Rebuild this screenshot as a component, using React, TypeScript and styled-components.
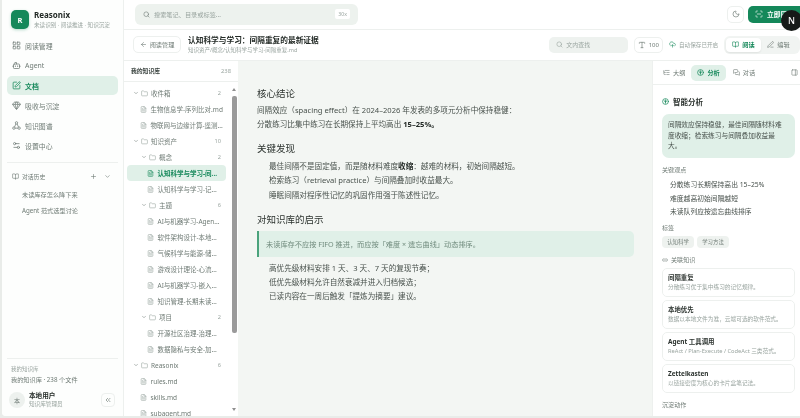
import React from 'react';
import styled, { createGlobalStyle } from 'styled-components';
import {
  ArrowLeft, BookOpen, Bot, ChevronDown, ChevronsLeft, CloudUpload, FileText, Folder, Gem, LayoutGrid,
  Link2, ListTree, MessagesSquare, Moon, PanelRight, PenLine, Plus, ScanLine, Search, Settings2, SquarePen, Type,
} from 'lucide-react';

const GREEN = '#15885a';
const MINT = '#e0f0e8';
const GREY = '#6f7b75';
const LIGHT = '#9aa5a0';
const LINE = '#edf0ee';

const GlobalStyle = createGlobalStyle`
  html, body { margin: 0; padding: 0; background: #e9ece9; }
  * { box-sizing: border-box; }
  body { font-family: "Noto Sans", "Noto Sans CJK SC", sans-serif; color: #2b322e; }
  p, h1, h2, h3, ul { margin: 0; padding: 0; }
  li { list-style: none; }
`;

const Page = styled.div`
  width: 800px;
  height: 418px;
  padding: 0 0 2px 2px;
  overflow: hidden;
  position: relative;
  background: #e9ece9;
  filter: blur(0.3px);
`;

const Shell = styled.div`
  height: 416px;
  display: flex;
  background: #fff;
  border-bottom-left-radius: 4px;
  overflow: hidden;
`;

const Sidebar = styled.aside`
  width: 122px;
  flex-shrink: 0;
  display: flex;
  flex-direction: column;
  border-right: 1px solid ${LINE};
  background: #fdfefd;
`;

const Brand = styled.div`
  height: 36px;
  padding: 10px 0 0 9px;
  display: flex;
  gap: 5px;
`;

const LogoMark = styled.div`
  width: 18px;
  height: 19px;
  border-radius: 5px;
  background: ${GREEN};
  color: #fff;
  font-size: 7.5px;
  font-weight: 700;
  display: flex;
  align-items: center;
  justify-content: center;
  box-shadow: 0 1px 3px rgba(21, 136, 90, 0.3);
`;

const BrandName = styled.div`
  font-size: 8px;
  font-weight: 700;
  line-height: 10px;
  color: #1f2622;
`;

const BrandSub = styled.div`
  font-size: 5.6px;
  line-height: 10px;
  color: ${LIGHT};
  white-space: nowrap;
`;

const Nav = styled.nav`
  padding: 0 5px;
  display: flex;
  flex-direction: column;
  gap: 1px;
`;

const NavItem = styled.div<{ $active?: boolean }>`
  height: 19px;
  padding-left: 5px;
  display: flex;
  align-items: center;
  gap: 4px;
  border-radius: 5px;
  font-size: 6.9px;
  font-weight: ${p => (p.$active ? 700 : 400)};
  color: ${p => (p.$active ? GREEN : GREY)};
  background: ${p => (p.$active ? MINT : 'transparent')};
`;

const HistoryBlock = styled.div`
  margin: 7px 5px 0;
  padding-top: 7px;
  border-top: 1px solid ${LINE};
`;

const HistoryHead = styled.div`
  height: 12px;
  margin-bottom: 5px;
  padding: 0 7px 0 5px;
  display: flex;
  align-items: center;
  gap: 3px;
  font-size: 5.8px;
  color: ${GREY};
  & > span { flex: 1; }
  & > svg:last-child { margin-left: 4px; }
`;

const HistoryItem = styled.div`
  height: 16px;
  padding-left: 15px;
  line-height: 16px;
  font-size: 6.2px;
  color: ${GREY};
`;

const SideFooter = styled.div`
  margin: auto 5px 0;
  padding: 5px 0 7px;
  border-top: 1px solid ${LINE};
`;

const LibLabel = styled.div`
  padding-left: 4px;
  font-size: 5.5px;
  line-height: 10px;
  color: ${LIGHT};
`;

const LibValue = styled.div`
  padding-left: 4px;
  font-size: 6.2px;
  line-height: 11px;
  color: ${GREY};
`;

const UserRow = styled.div`
  margin-top: 6px;
  padding: 0 2px;
  display: flex;
  align-items: center;
  gap: 4px;
`;

const Avatar = styled.div`
  width: 16px;
  height: 16px;
  border-radius: 50%;
  background: #edf1ee;
  color: ${GREY};
  font-size: 6px;
  display: flex;
  align-items: center;
  justify-content: center;
`;

const UserName = styled.div`
  font-size: 6.6px;
  font-weight: 700;
  line-height: 9px;
  color: #232a26;
`;

const UserRole = styled.div`
  font-size: 5.6px;
  line-height: 9px;
  color: ${LIGHT};
`;

const CollapseButton = styled.div`
  margin-left: auto;
  margin-right: 1px;
  width: 14px;
  height: 14px;
  border: 1px solid ${LINE};
  border-radius: 4px;
  color: ${GREY};
  display: flex;
  align-items: center;
  justify-content: center;
`;

const Main = styled.main`
  flex: 1;
  min-width: 0;
  display: flex;
  flex-direction: column;
  overflow: hidden;
`;

const TopBar = styled.header`
  height: 30px;
  flex-shrink: 0;
  padding: 0 0 1px 11px;
  display: flex;
  align-items: center;
  justify-content: space-between;
  border-bottom: 1px solid ${LINE};
`;

const SearchBox = styled.div`
  width: 223px;
  height: 21px;
  padding: 0 8px;
  border-radius: 6px;
  background: #edf2ee;
  color: ${LIGHT};
  font-size: 6.2px;
  display: flex;
  align-items: center;
  gap: 4px;
  & > span { flex: 1; }
`;

const Kbd = styled.div`
  padding: 1px 3px;
  border-radius: 2px;
  background: #fff;
  font-size: 5.2px;
  color: ${LIGHT};
`;

const TopActions = styled.div`
  margin-right: -12px;
  display: flex;
  align-items: center;
  gap: 4px;
`;

const IconButton = styled.div`
  width: 17px;
  height: 17px;
  border: 1px solid ${LINE};
  border-radius: 5px;
  color: ${GREY};
  display: flex;
  align-items: center;
  justify-content: center;
`;

const PrimaryButton = styled.div`
  width: 64px;
  height: 17px;
  padding-left: 7px;
  border-radius: 5px;
  background: ${GREEN};
  color: #fff;
  font-size: 6.8px;
  font-weight: 700;
  display: flex;
  align-items: center;
  gap: 4px;
`;

const DocHeader = styled.div`
  height: 31px;
  flex-shrink: 0;
  padding: 0 0 1px 9px;
  display: flex;
  align-items: center;
  border-bottom: 1px solid ${LINE};
`;

const BackButton = styled.div`
  width: 49px;
  height: 17px;
  border: 1px solid ${LINE};
  border-radius: 5px;
  color: ${GREY};
  font-size: 6.2px;
  display: flex;
  align-items: center;
  justify-content: center;
  gap: 3px;
`;

const DocTitleBlock = styled.div`
  margin-left: 7px;
  width: 369px;
`;

const DocTitle = styled.h1`
  font-size: 7.7px;
  font-weight: 700;
  line-height: 11px;
  color: #232a26;
`;

const DocPath = styled.div`
  font-size: 5.5px;
  line-height: 9px;
  color: ${LIGHT};
`;

const FindBox = styled.div`
  width: 80px;
  height: 16px;
  padding-left: 7px;
  border-radius: 5px;
  background: #eef2ef;
  color: ${LIGHT};
  font-size: 6px;
  display: flex;
  align-items: center;
  gap: 3px;
`;

const FontBox = styled.div`
  margin-left: 6px;
  width: 30px;
  height: 16px;
  border: 1px solid ${LINE};
  border-radius: 5px;
  color: ${GREY};
  font-size: 6px;
  display: flex;
  align-items: center;
  justify-content: center;
  gap: 3px;
`;

const AutoSave = styled.div`
  margin-left: 6px;
  width: 55px;
  flex-shrink: 0;
  color: ${LIGHT};
  font-size: 5.6px;
  white-space: nowrap;
  display: flex;
  align-items: center;
  gap: 3px;
  & > svg { color: ${GREEN}; flex-shrink: 0; }
`;

const Segmented = styled.div`
  width: 76px;
  flex-shrink: 0;
  height: 18px;
  padding: 2px;
  border-radius: 6px;
  background: #f1f4f2;
  display: flex;
  align-items: center;
`;

const SegItem = styled.div<{ $active?: boolean }>`
  width: 35px;
  height: 14px;
  border-radius: 4px;
  background: ${p => (p.$active ? '#fff' : 'transparent')};
  box-shadow: ${p => (p.$active ? '0 1px 2px rgba(0,0,0,0.08)' : 'none')};
  color: ${p => (p.$active ? GREEN : GREY)};
  font-weight: ${p => (p.$active ? 700 : 400)};
  font-size: 6.2px;
  display: flex;
  align-items: center;
  justify-content: center;
  gap: 3px;
`;

const Body = styled.div`
  flex: 1;
  min-height: 0;
  display: grid;
  grid-template-columns: 114px 414px 148px;
`;

const TreePanel = styled.section`
  display: flex;
  flex-direction: column;
  min-height: 0;
`;

const TreeHead = styled.div`
  height: 21px;
  flex-shrink: 0;
  padding: 0 7px 1px 7px;
  display: flex;
  align-items: center;
  justify-content: space-between;
  border-bottom: 1px solid ${LINE};
  font-size: 5.8px;
  font-weight: 700;
  color: #3b4440;
  & > span { font-weight: 400; color: ${LIGHT}; }
`;

const TreeScroll = styled.div`
  flex: 1;
  min-height: 0;
  display: flex;
  padding-left: 3px;
`;

const TreeList = styled.ul`
  width: 99px;
  padding-top: 3px;
`;

const TreeRow = styled.li<{ $indent: number; $active?: boolean; $folder?: boolean }>`
  height: 16px;
  padding: 0 5px 0 ${p => p.$indent}px;
  display: flex;
  align-items: center;
  gap: ${p => (p.$folder ? 2 : 3.5)}px;
  border-radius: 4px;
  white-space: nowrap;
  font-size: 6.5px;
  font-weight: ${p => (p.$active ? 700 : 400)};
  color: ${p => (p.$active ? GREEN : GREY)};
  background: ${p => (p.$active ? MINT : 'transparent')};
  & > svg { flex-shrink: 0; }
`;

const TreeLabel = styled.span<{ $folder?: boolean }>`
  margin-left: ${p => (p.$folder ? 1 : 0)}px;
`;

const TreeCount = styled.span`
  margin-left: auto;
  font-size: 5.6px;
  color: ${LIGHT};
`;

const ScrollRail = styled.div`
  width: 6px;
  margin-left: 5px;
  padding: 6px 0 5px;
  display: flex;
  flex-direction: column;
  align-items: center;
`;

const ScrollArrow = styled.div<{ $down?: boolean }>`
  width: 0;
  height: 0;
  border-left: 2.5px solid transparent;
  border-right: 2.5px solid transparent;
  border-${p => (p.$down ? 'top' : 'bottom')}: 3px solid #8f8f8f;
  margin-top: ${p => (p.$down ? 'auto' : '0')};
`;

const ScrollThumb = styled.div`
  width: 5px;
  height: 237px;
  margin-top: 5px;
  border-radius: 2px;
  background: #9a9a9a;
`;

const Article = styled.article`
  padding: 0 18px 0 19px;
  background: #f3f6f3;
  overflow: hidden;
`;

const Heading = styled.h2<{ $top: number }>`
  margin-top: ${p => p.$top}px;
  font-size: 9.5px;
  font-weight: 400;
  line-height: 14px;
  color: #2b322e;
`;

const Para = styled.p`
  margin-top: 3px;
  font-size: 7.6px;
  line-height: 13.5px;
  color: #48514c;
  & > strong { font-weight: 700; color: #232a26; }
`;

const BulletList = styled.ul<{ $top: number }>`
  margin-top: ${p => p.$top}px;
  padding-left: 12px;
  font-size: 7.6px;
  line-height: 14.3px;
  color: #48514c;
  & strong { font-weight: 700; color: #232a26; }
`;

const Callout = styled.div`
  margin-top: 4px;
  height: 26px;
  padding-left: 7px;
  display: flex;
  align-items: center;
  border-left: 2px solid #4aa37c;
  border-radius: 0 5px 5px 0;
  background: ${MINT};
  font-size: 7.2px;
  color: #6f8a7c;
`;

const SidePanel = styled.section`
  border-left: 1px solid ${LINE};
  min-height: 0;
  overflow: hidden;
`;

const TabBar = styled.div`
  height: 24px;
  padding: 0 0 0 9px;
  display: flex;
  align-items: center;
  white-space: nowrap;
  border-bottom: 1px solid ${LINE};
`;

const Tab = styled.div<{ $active?: boolean; $push?: boolean }>`
  height: 16px;
  padding: 0 6px 0 ${p => (p.$active ? 6 : 1)}px;
  margin-right: ${p => (p.$active ? 6 : 0)}px;
  margin-left: ${p => (p.$push ? 29 : 0)}px;
  border-radius: 5px;
  background: ${p => (p.$active ? MINT : 'transparent')};
  color: ${p => (p.$active ? GREEN : GREY)};
  font-size: 6.2px;
  font-weight: ${p => (p.$active ? 700 : 400)};
  display: flex;
  align-items: center;
  gap: 3px;
`;

const PanelBody = styled.div`
  padding: 9px 5px 0 9px;
`;

const PanelTitle = styled.h3`
  height: 14px;
  display: flex;
  align-items: center;
  gap: 4px;
  font-size: 7.5px;
  font-weight: 700;
  color: #2b322e;
  & > svg { color: ${GREEN}; }
`;

const Summary = styled.div`
  margin-top: 6px;
  height: 44px;
  padding: 6px 12px 6px 6px;
  border-radius: 7px;
  background: ${MINT};
  font-size: 6.7px;
  line-height: 10.5px;
  color: #48514c;
`;

const SectionLabel = styled.div<{ $top: number }>`
  margin-top: ${p => p.$top}px;
  display: flex;
  align-items: center;
  gap: 3px;
  font-size: 6.1px;
  line-height: 10px;
  color: ${GREY};
`;

const Points = styled.ul`
  margin-top: 3px;
  padding-left: 8px;
  font-size: 6.8px;
  line-height: 13.5px;
  color: #48514c;
`;

const TagRow = styled.div`
  margin-top: 3px;
  display: flex;
  gap: 3px;
`;

const TagChip = styled.div`
  width: 32px;
  height: 12px;
  border-radius: 4px;
  background: #eef2ef;
  color: ${GREY};
  font-size: 5.4px;
  display: flex;
  align-items: center;
  justify-content: center;
`;

const RelatedList = styled.div`
  margin-top: 3px;
  display: flex;
  flex-direction: column;
  gap: 3px;
`;

const RelatedCard = styled.div`
  height: 29px;
  padding: 4px 0 0 5px;
  border: 1px solid ${LINE};
  border-radius: 5px;
  white-space: nowrap;
`;

const RelatedTitle = styled.div`
  font-size: 6.4px;
  font-weight: 700;
  line-height: 10px;
  color: #2b322e;
`;

const RelatedDesc = styled.div`
  font-size: 5.7px;
  line-height: 9px;
  color: ${LIGHT};
`;

const DevBadge = styled.div`
  position: absolute;
  left: 781px;
  top: 10px;
  width: 21px;
  height: 21px;
  border-radius: 50%;
  background: #161a18;
  color: #fff;
  font-size: 9px;
  font-weight: 500;
  display: flex;
  align-items: center;
  justify-content: center;
`;

// circle with a sprout, lucide has nothing close to this one
const SproutIcon = ({ size }: { size: number }) => (
  <svg width={size} height={size} viewBox="0 0 24 24" fill="none" stroke="currentColor" strokeWidth="2.4" strokeLinecap="round">
    <circle cx="12" cy="12" r="10" />
    <path d="M12 6v12M7.5 9.5c0 2.5 2 3.5 4.5 3.5M16.5 9.5c0 2.5-2 3.5-4.5 3.5" />
  </svg>
);

const GraphIcon = ({ size }: { size: number }) => (
  <svg width={size} height={size} viewBox="0 0 24 24" fill="none" stroke="currentColor" strokeWidth="2">
    <circle cx="12" cy="5" r="3.2" />
    <circle cx="5" cy="19" r="3.2" />
    <circle cx="19" cy="19" r="3.2" />
    <path d="M10.4 7.8 6.6 16.2M13.6 7.8l3.8 8.4M8.2 19h7.6" />
  </svg>
);

const navItems = [
  { label: '阅读管理', icon: <LayoutGrid size={9} /> },
  { label: 'Agent', icon: <Bot size={9} /> },
  { label: '文档', icon: <SquarePen size={9} />, active: true },
  { label: '吸收与沉淀', icon: <Gem size={9} /> },
  { label: '知识图谱', icon: <GraphIcon size={9} /> },
  { label: '设置中心', icon: <Settings2 size={9} /> },
];

type TreeNode = { label: string; depth: number; folder?: boolean; count?: number; active?: boolean };

const tree: TreeNode[] = [
  { label: '收件箱', depth: 0, folder: true, count: 2 },
  { label: '生物信息学-序列比对.md', depth: 1 },
  { label: '物联网与边缘计算-遥测...', depth: 1 },
  { label: '知识资产', depth: 0, folder: true, count: 10 },
  { label: '概念', depth: 1, folder: true, count: 2 },
  { label: '认知科学与学习-间...', depth: 2, active: true },
  { label: '认知科学与学习-记...', depth: 2 },
  { label: '主题', depth: 1, folder: true, count: 6 },
  { label: 'AI与机器学习-Agen...', depth: 2 },
  { label: '软件架构设计-本地...', depth: 2 },
  { label: '气候科学与能源-储...', depth: 2 },
  { label: '游戏设计理论-心流...', depth: 2 },
  { label: 'AI与机器学习-嵌入...', depth: 2 },
  { label: '知识管理-长期未读...', depth: 2 },
  { label: '项目', depth: 1, folder: true, count: 2 },
  { label: '开源社区治理-治理...', depth: 2 },
  { label: '数据隐私与安全-加...', depth: 2 },
  { label: 'Reasonix', depth: 0, folder: true, count: 6 },
  { label: 'rules.md', depth: 1 },
  { label: 'skills.md', depth: 1 },
  { label: 'subagent.md', depth: 1 },
];

const related = [
  { title: '间隔重复', desc: '分散练习优于集中练习的记忆规律。' },
  { title: '本地优先', desc: '数据以本地文件为准，云端可选的软件范式。' },
  { title: 'Agent 工具调用', desc: 'ReAct / Plan-Execute / CodeAct 三类范式。' },
  { title: 'Zettelkasten', desc: '以链接密度为核心的卡片盒笔记法。' },
];

const rowIndent = (node: TreeNode) => {
  if (node.folder) return node.depth === 0 ? 6 : 14;
  return node.depth === 1 ? 13 : 20;
};

export default function App() {
  return (
    <Page>
      <GlobalStyle />
      <Shell>
        <Sidebar>
          <Brand>
            <LogoMark>R</LogoMark>
            <div>
              <BrandName>Reasonix</BrandName>
              <BrandSub>未读识别 · 阅读推进 · 知识沉淀</BrandSub>
            </div>
          </Brand>
          <Nav>
            {navItems.map(item => (
              <NavItem key={item.label} $active={item.active}>
                {item.icon}
                {item.label}
              </NavItem>
            ))}
          </Nav>
          <HistoryBlock>
            <HistoryHead>
              <BookOpen size={7} />
              <span>对话历史</span>
              <Plus size={7} />
              <ChevronDown size={7} />
            </HistoryHead>
            <HistoryItem>未读库存怎么降下来</HistoryItem>
            <HistoryItem>Agent 范式选型讨论</HistoryItem>
          </HistoryBlock>
          <SideFooter>
            <LibLabel>我的知识库</LibLabel>
            <LibValue>我的知识库 · 238 个文件</LibValue>
            <UserRow>
              <Avatar>本</Avatar>
              <div>
                <UserName>本地用户</UserName>
                <UserRole>知识库管理员</UserRole>
              </div>
              <CollapseButton>
                <ChevronsLeft size={8} />
              </CollapseButton>
            </UserRow>
          </SideFooter>
        </Sidebar>

        <Main>
          <TopBar>
            <SearchBox>
              <Search size={7} color={GREY} />
              <span>搜索笔记、目录或标签...</span>
              <Kbd>30x</Kbd>
            </SearchBox>
            <TopActions>
              <IconButton>
                <Moon size={8} />
              </IconButton>
              <PrimaryButton>
                <ScanLine size={8} />
                立即同步
              </PrimaryButton>
            </TopActions>
          </TopBar>

          <DocHeader>
            <BackButton>
              <ArrowLeft size={7} />
              阅读管理
            </BackButton>
            <DocTitleBlock>
              <DocTitle>认知科学与学习：间隔重复的最新证据</DocTitle>
              <DocPath>知识资产/概念/认知科学与学习-间隔重复.md</DocPath>
            </DocTitleBlock>
            <FindBox>
              <Search size={7} />
              文内查找
            </FindBox>
            <FontBox>
              <Type size={8} />
              100
            </FontBox>
            <AutoSave>
              <CloudUpload size={7} />
              自动保存已开启
            </AutoSave>
            <Segmented>
              <SegItem $active>
                <BookOpen size={7} />
                阅读
              </SegItem>
              <SegItem>
                <PenLine size={7} />
                编辑
              </SegItem>
            </Segmented>
          </DocHeader>

          <Body>
            <TreePanel>
              <TreeHead>
                我的知识库
                <span>238</span>
              </TreeHead>
              <TreeScroll>
                <TreeList>
                  {tree.map(node => (
                    <TreeRow key={node.label} $indent={rowIndent(node)} $active={node.active} $folder={node.folder}>
                      {node.folder && <ChevronDown size={6} />}
                      {node.folder ? <Folder size={7} color={LIGHT} /> : <FileText size={7} color={node.active ? GREEN : LIGHT} />}
                      <TreeLabel $folder={node.folder}>{node.label}</TreeLabel>
                      {node.count !== undefined && <TreeCount>{node.count}</TreeCount>}
                    </TreeRow>
                  ))}
                </TreeList>
                <ScrollRail>
                  <ScrollArrow />
                  <ScrollThumb />
                  <ScrollArrow $down />
                </ScrollRail>
              </TreeScroll>
            </TreePanel>

            <Article>
              <Heading $top={26}>核心结论</Heading>
              <Para>
                间隔效应（spacing effect）在 2024–2026 年发表的多项元分析中保持稳健：
                <br />
                分散练习比集中练习在长期保持上平均高出 <strong>15–25%。</strong>
              </Para>
              <Heading $top={11}>关键发现</Heading>
              <BulletList $top={3}>
                <li>最佳间隔不是固定值，而是随材料难度<strong>收缩</strong>：越难的材料，初始间隔越短。</li>
                <li>检索练习（retrieval practice）与间隔叠加时收益最大。</li>
                <li>睡眠间隔对程序性记忆的巩固作用强于陈述性记忆。</li>
              </BulletList>
              <Heading $top={11}>对知识库的启示</Heading>
              <Callout>未读库存不应按 FIFO 推进，而应按「难度 × 遗忘曲线」动态排序。</Callout>
              <BulletList $top={4}>
                <li>高优先级材料安排 1 天、3 天、7 天的复现节奏；</li>
                <li>低优先级材料允许自然衰减并进入归档候选；</li>
                <li>已读内容在一周后触发「提炼为摘要」建议。</li>
              </BulletList>
            </Article>

            <SidePanel>
              <TabBar>
                <Tab>
                  <ListTree size={7} />
                  大纲
                </Tab>
                <Tab $active>
                  <SproutIcon size={7} />
                  分析
                </Tab>
                <Tab>
                  <MessagesSquare size={7} />
                  对话
                </Tab>
                <Tab $push>
                  <PanelRight size={7} />
                </Tab>
              </TabBar>
              <PanelBody>
                <PanelTitle>
                  <SproutIcon size={7} />
                  智能分析
                </PanelTitle>
                <Summary>间隔效应保持稳健，最佳间隔随材料难度收缩；检索练习与间隔叠加收益最大。</Summary>
                <SectionLabel $top={7}>关键观点</SectionLabel>
                <Points>
                  <li>分散练习长期保持高出 15–25%</li>
                  <li>难度越高初始间隔越短</li>
                  <li>未读队列应按遗忘曲线排序</li>
                </Points>
                <SectionLabel $top={4}>标签</SectionLabel>
                <TagRow>
                  <TagChip>认知科学</TagChip>
                  <TagChip>学习方法</TagChip>
                </TagRow>
                <SectionLabel $top={7}>
                  <Link2 size={6} />
                  关联知识
                </SectionLabel>
                <RelatedList>
                  {related.map(item => (
                    <RelatedCard key={item.title}>
                      <RelatedTitle>{item.title}</RelatedTitle>
                      <RelatedDesc>{item.desc}</RelatedDesc>
                    </RelatedCard>
                  ))}
                </RelatedList>
                <SectionLabel $top={7}>沉淀动作</SectionLabel>
              </PanelBody>
            </SidePanel>
          </Body>
        </Main>
      </Shell>
      <DevBadge>N</DevBadge>
    </Page>
  );
}
